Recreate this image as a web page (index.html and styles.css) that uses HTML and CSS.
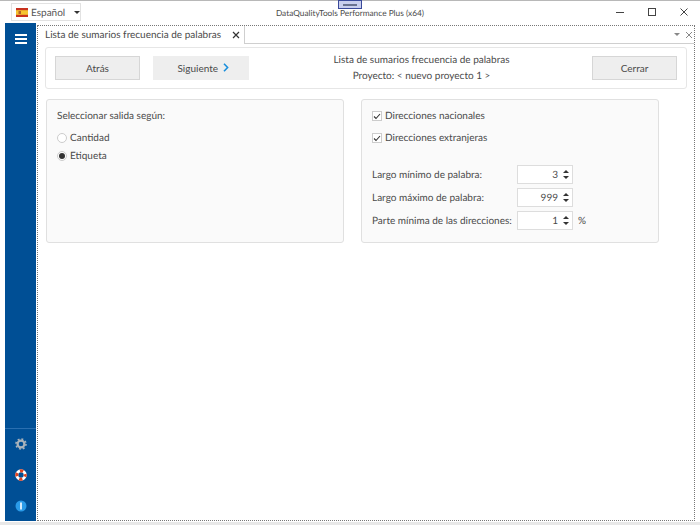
FILE: index.html
```html
<!DOCTYPE html>
<html lang="es">
<head>
  <meta charset="UTF-8">
  <title>DataQualityTools Performance Plus (x64)</title>
  <link rel="stylesheet" href="styles.css">
</head>
<body>

<div class="window">
  <div class="titlebar">
    <div class="lang-select">
      <svg class="flag" width="12" height="9" viewBox="0 0 12 9">
        <rect width="12" height="9" fill="#c8321e"/>
        <rect y="2.2" width="12" height="4.6" fill="#f5c431"/>
        <rect x="2.5" y="3" width="2.5" height="3" fill="#b5622a"/>
      </svg>
      <span class="lang-name">Español</span>
      <span class="caret"></span>
    </div>
    <div class="app-title">DataQualityTools Performance Plus (x64)</div>
    <div class="win-buttons">
      <svg width="10" height="10" viewBox="0 0 10 10"><path d="M1 5.5h8" stroke="#444" fill="none"/></svg>
      <svg width="10" height="10" viewBox="0 0 10 10"><rect x="1.5" y="1.5" width="7" height="7" stroke="#444" fill="none"/></svg>
      <svg width="10" height="10" viewBox="0 0 10 10"><path d="M1.5 1.5l7 7M8.5 1.5l-7 7" stroke="#444" fill="none"/></svg>
    </div>
  </div>

  <div class="main">
    <div class="sidebar">
      <div class="menu-btn"><span></span><span></span><span></span></div>
      <div class="side-icons">
        <svg width="12" height="12" viewBox="0 0 12 12">
          <circle cx="6" cy="6" r="3.4" fill="none" stroke="#a9b3bb" stroke-width="2.2"/>
          <circle cx="6" cy="6" r="5" fill="none" stroke="#a9b3bb" stroke-width="1.6" stroke-dasharray="1.9 2"/>
        </svg>
        <svg width="12" height="12" viewBox="0 0 12 12">
          <circle cx="6" cy="6" r="4.2" fill="none" stroke="#fff" stroke-width="3"/>
          <circle cx="6" cy="6" r="4.2" fill="none" stroke="#e0431f" stroke-width="3" stroke-dasharray="3.3 3.3" stroke-dashoffset="1.6"/>
        </svg>
        <svg width="12" height="12" viewBox="0 0 12 12">
          <circle cx="6" cy="6" r="5.5" fill="#2a9be8"/>
          <rect x="5.2" y="2.5" width="1.6" height="7" fill="#fff"/>
        </svg>
      </div>
    </div>

    <div class="doc">
      <div class="tabstrip">
        <div class="tab">
          <span>Lista de sumarios frecuencia de palabras</span>
          <svg width="8" height="8" viewBox="0 0 8 8"><path d="M1 1l6 6M7 1l-6 6" stroke="#333" stroke-width="1.2" fill="none"/></svg>
        </div>
        <div class="tab-tools">
          <span class="caret small"></span>
          <svg width="8" height="8" viewBox="0 0 8 8"><path d="M1 1l6 6M7 1l-6 6" stroke="#888" fill="none"/></svg>
        </div>
      </div>

      <div class="content">
        <div class="head-box">
          <button class="btn btn-border">Atrás</button>
          <button class="btn btn-next">Siguiente
            <svg width="6" height="9" viewBox="0 0 6 9"><path d="M1 .8l3.6 3.7L1 8.2" stroke="#1a8fdc" stroke-width="1.6" fill="none"/></svg>
          </button>
          <div class="head-text">
            <div>Lista de sumarios frecuencia de palabras</div>
            <div>Proyecto: &lt; nuevo proyecto 1 &gt;</div>
          </div>
          <button class="btn btn-border">Cerrar</button>
        </div>

        <div class="panels">
          <div class="panel panel-left">
            <div class="panel-label">Seleccionar salida según:</div>
            <div class="radio-row"><span class="radio"></span>Cantidad</div>
            <div class="radio-row"><span class="radio checked"></span>Etiqueta</div>
          </div>

          <div class="panel panel-right">
            <div class="check-row">
              <span class="check"><svg width="8" height="7" viewBox="0 0 8 7"><path d="M1 3.5l2 2 4-4.5" stroke="#333" stroke-width="1.1" fill="none"/></svg></span>
              Direcciones nacionales
            </div>
            <div class="check-row">
              <span class="check"><svg width="8" height="7" viewBox="0 0 8 7"><path d="M1 3.5l2 2 4-4.5" stroke="#333" stroke-width="1.1" fill="none"/></svg></span>
              Direcciones extranjeras
            </div>
            <div class="fields">
              <div class="field-row">
                <span class="field-label">Largo mínimo de palabra:</span>
                <div class="spin"><span>3</span><span class="arrows"><i class="up"></i><i class="down"></i></span></div>
              </div>
              <div class="field-row">
                <span class="field-label">Largo máximo de palabra:</span>
                <div class="spin"><span>999</span><span class="arrows"><i class="up"></i><i class="down"></i></span></div>
              </div>
              <div class="field-row">
                <span class="field-label">Parte mínima de las direcciones:</span>
                <div class="spin"><span>1</span><span class="arrows"><i class="up"></i><i class="down"></i></span></div>
                <span class="unit">%</span>
              </div>
            </div>
          </div>
        </div>
      </div>
    </div>
  </div>

  <div class="drag-handle"><span></span></div>
</div>

</body>
</html>
```

FILE: styles.css
```css
html, body {
  margin: 0;
  height: 100%;
}

body {
  font-family: Lato, "Open Sans", sans-serif;
  font-size: 10px;
  text-rendering: geometricPrecision;
  color: #4a4a4a;
  background: #fff;
  overflow: hidden;
}

.window {
  position: relative;
  width: 700px;
  height: 525px;
  box-sizing: border-box;
  border-top: 1px solid #b8b8b8;
  border-bottom: 3px solid #e8e8e8;
  background: #fff;
  display: flex;
  flex-direction: column;
}

.titlebar {
  height: 22px;
  display: flex;
  align-items: center;
  padding-left: 11px;
  flex: none;
}

.lang-select {
  width: 70px;
  height: 18px;
  border: 1px solid #e2e2e2;
  display: flex;
  align-items: center;
  padding-left: 4px;
  gap: 3px;
  box-sizing: border-box;
  font-size: 10px;
  color: #555;
}

.lang-name {
  padding-top: 1px;
}

.flag {
  flex: none;
}

.caret {
  width: 0;
  height: 0;
  border-left: 3px solid transparent;
  border-right: 3px solid transparent;
  border-top: 3px solid #333;
  margin-left: 6px;
}

.caret.small {
  border-top-color: #888;
  margin: 0;
}

.app-title {
  width: 330px;
  margin-left: 104px;
  text-align: center;
  font-size: 8.3px;
  padding-top: 1px;
}

.win-buttons {
  display: flex;
  gap: 22px;
  margin-left: auto;
  margin-right: 11px;
}

.main {
  flex: 1;
  display: flex;
  padding: 0 5px 1px 5px;
  gap: 1px;
  background: #fff;
  min-height: 0;
}

.sidebar {
  width: 31px;
  background: #004f95;
  display: flex;
  flex-direction: column;
  justify-content: space-between;
  align-items: center;
  flex: none;
}

.menu-btn {
  margin-top: 11px;
  width: 12px;
  display: flex;
  flex-direction: column;
  gap: 2px;
}

.menu-btn span {
  height: 2px;
  background: #fff;
}

.side-icons {
  display: flex;
  flex-direction: column;
  gap: 19px;
  align-self: stretch;
  align-items: center;
  border-top: 1px solid #2a6fb0;
  padding: 9px 0 9px;
}

.doc {
  flex: 1;
  margin-top: 2px;
  border: 1px dotted #777;
  display: flex;
  flex-direction: column;
  min-width: 0;
}

.tabstrip {
  height: 18px;
  box-sizing: border-box;
  flex: none;
  display: flex;
  align-items: stretch;
  border-bottom: 1px solid #cfcfcf;
  padding-left: 1px;
}

.tab {
  width: 206px;
  box-sizing: border-box;
  display: flex;
  align-items: center;
  justify-content: space-between;
  padding: 0 4px 0 6px;
  background: #fff;
  border-right: 1px solid #cfcfcf;
  margin-bottom: -1px;
  white-space: nowrap;
}

.tab-tools {
  margin-left: auto;
  display: flex;
  align-items: center;
  gap: 5px;
  padding-right: 1px;
}

.content {
  flex: 1;
  padding: 3px 7px 0 7px;
}

.head-box {
  height: 42px;
  box-sizing: border-box;
  border: 1px solid #e6e6e6;
  border-radius: 3px;
  display: flex;
  align-items: center;
  padding: 0 9px;
}

.btn {
  font: inherit;
  color: #4a4a4a;
  height: 24px;
  background: #eeeeee;
  flex: none;
  padding: 0;
}

.btn-border {
  width: 85px;
  border: 1px solid #d6d6d6;
}

.btn-next {
  width: 96px;
  border: 0;
  margin-left: 13px;
  padding-left: 4px;
}

.btn-next svg {
  margin-left: 2px;
}

.head-text {
  flex: 1;
  text-align: center;
  line-height: 16px;
  margin-left: 2px;
}

.panels {
  display: flex;
  gap: 17px;
  margin: 10px 0 0 1px;
}

.panel {
  width: 298px;
  height: 144px;
  box-sizing: border-box;
  background: #fafafa;
  border: 1px solid #e0e0e0;
  border-radius: 3px;
}

.panel-left {
  padding: 8px 10px;
}

.panel-label {
  line-height: 16px;
  margin-bottom: 5px;
}

.radio-row {
  display: flex;
  align-items: center;
  gap: 3px;
  height: 18px;
}

.radio {
  width: 8px;
  height: 8px;
  border: 1px solid #ccc;
  border-radius: 50%;
  background: #fff;
  position: relative;
  flex: none;
}

.radio.checked::after {
  content: "";
  position: absolute;
  left: 1px;
  top: 1px;
  width: 6px;
  height: 6px;
  border-radius: 50%;
  background: #333;
}

.panel-right {
  padding: 8px 10px;
}

.check-row {
  display: flex;
  align-items: center;
  gap: 3px;
  height: 16px;
  margin-bottom: 6px;
}

.check {
  width: 8px;
  height: 8px;
  border: 1px solid #ccc;
  background: #fff;
  display: flex;
  align-items: center;
  justify-content: center;
  flex: none;
}

.fields {
  padding-top: 13px;
  display: flex;
  flex-direction: column;
  gap: 4px;
}

.field-row {
  display: flex;
  align-items: center;
  height: 19px;
}

.field-label {
  width: 145px;
  flex: none;
  white-space: nowrap;
}

.spin {
  width: 56px;
  height: 19px;
  box-sizing: border-box;
  border: 1px solid #ddd;
  background: #fff;
  display: flex;
  align-items: center;
  justify-content: flex-end;
  padding-right: 2px;
  gap: 4px;
}

.arrows {
  display: flex;
  flex-direction: column;
  gap: 3px;
  padding: 0 1px;
}

.arrows i {
  width: 0;
  height: 0;
  border-left: 3px solid transparent;
  border-right: 3px solid transparent;
}

.arrows .up {
  border-bottom: 3px solid #333;
}

.arrows .down {
  border-top: 3px solid #333;
}

.unit {
  margin-left: 5px;
}

.drag-handle {
  position: absolute;
  left: 338px;
  top: -1px;
  width: 24px;
  height: 9px;
  box-sizing: border-box;
  background: #c9cfee;
  border: 1px solid #3a4a9a;
  display: flex;
  justify-content: center;
  padding-top: 3px;
}

.drag-handle span {
  width: 14px;
  height: 2px;
  background: #6a7390;
}
```
